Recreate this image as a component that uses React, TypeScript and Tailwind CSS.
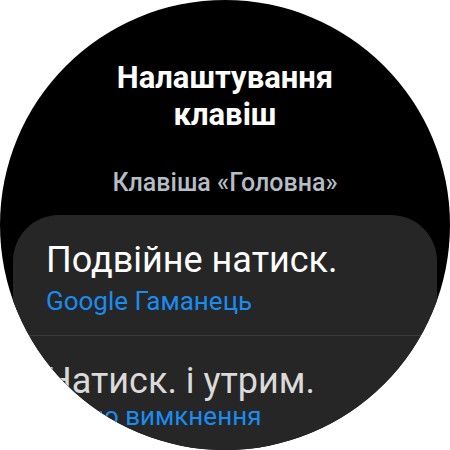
import React from 'react';

const App: React.FC = () => {
    return (
        <div className="w-[450px] h-[450px] bg-white font-['Roboto',sans-serif]">
            {/* Watch face */}
            <div className="w-[450px] h-[450px] rounded-full overflow-hidden bg-black flex flex-col items-center">
                <h1 className="mt-[59px] text-white text-[31px] font-bold leading-[37px] text-center">
                    Налаштування
                    <br />
                    клавіш
                </h1>
                <p className="mt-[36px] text-[#b4bcc4] text-[25px] font-medium leading-[28px]">Клавіша «Головна»</p>

                {/* Options card */}
                <div className="mt-[18px] w-[424px] flex-1 bg-[#262626] rounded-t-[46px] flex flex-col">
                    <div className="pl-[33px] pt-[24px] pb-[20px] border-b border-[#3a3a3a]">
                        <p className="text-white text-[36px] leading-[42px]">Подвійне натиск.</p>
                        <p className="text-[#1a8cf0] text-[26px] leading-[28px] mt-[6px]">Google Гаманець</p>
                    </div>
                    <div className="pl-[33px] pt-[24px]">
                        <p className="text-[#dadada] text-[36px] leading-[42px]">Натиск. і утрим.</p>
                        <p className="text-[#1a8cf0] text-[26px] leading-[28px]">Меню вимкнення</p>
                    </div>
                </div>
            </div>
        </div>
    );
};

export default App;
